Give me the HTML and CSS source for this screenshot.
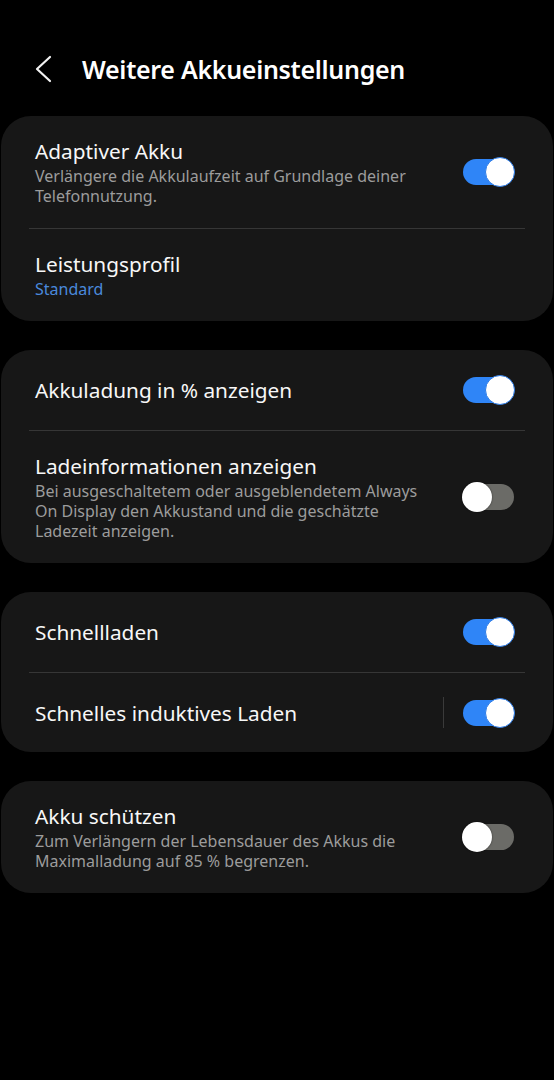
FILE: index.html
```html
<html>

<head>
    <meta name="viewport" content="width=device-width, initial-scale=1.0">
    <meta charset="UTF-8">
    <title>Weitere Akkueinstellungen</title>
    <link rel="stylesheet" href="styles.css">
</head>

<body>
    <div id="header">
        <svg class="back" width="20" height="28" viewBox="0 0 20 28">
            <path d="M16 2 L3 14 L16 26" fill="none" stroke="#f2f2f2" stroke-width="2.2" stroke-linecap="round" stroke-linejoin="round" />
        </svg>
        <h1>Weitere Akkueinstellungen</h1>
    </div>

    <div class="card">
        <div class="row">
            <div class="text">
                <div class="title">Adaptiver Akku</div>
                <div class="sub">Verlängere die Akkulaufzeit auf Grundlage deiner Telefonnutzung.</div>
            </div>
            <div class="switch on"></div>
        </div>
        <div class="row">
            <div class="text">
                <div class="title">Leistungsprofil</div>
                <div class="value">Standard</div>
            </div>
        </div>
    </div>

    <div class="card">
        <div class="row">
            <div class="text">
                <div class="title">Akkuladung in % anzeigen</div>
            </div>
            <div class="switch on"></div>
        </div>
        <div class="row">
            <div class="text">
                <div class="title">Ladeinformationen anzeigen</div>
                <div class="sub">Bei ausgeschaltetem oder ausgeblendetem Always On Display den Akkustand und die geschätzte Ladezeit anzeigen.</div>
            </div>
            <div class="switch"></div>
        </div>
    </div>

    <div class="card">
        <div class="row">
            <div class="text">
                <div class="title">Schnellladen</div>
            </div>
            <div class="switch on"></div>
        </div>
        <div class="row">
            <div class="text">
                <div class="title">Schnelles induktives Laden</div>
            </div>
            <div class="vline"></div>
            <div class="switch on"></div>
        </div>
    </div>

    <div class="card">
        <div class="row">
            <div class="text">
                <div class="title">Akku schützen</div>
                <div class="sub">Zum Verlängern der Lebensdauer des Akkus die Maximalladung auf 85 % begrenzen.</div>
            </div>
            <div class="switch"></div>
        </div>
    </div>
</body>

</html>
```

FILE: styles.css
```css
body {
    margin: 0;
    background-color: #000000;
    color: #f7f7f7;
    font-family: "Noto Sans", Roboto, sans-serif;
}

#header {
    display: flex;
    align-items: center;
    height: 52px;
    margin-top: 43px;
    margin-bottom: 21px;
    padding-left: 34px;
}

#header .back {
    margin-right: 28px;
}

#header h1 {
    margin: 0;
    font-size: 25px;
    font-weight: 600;
    letter-spacing: -0.3px;
    color: #ffffff;
}

.card {
    background-color: #171717;
    border-radius: 30px;
    margin: 0 1px 29px 1px;
    padding: 0 28px;
}

.row {
    display: flex;
    align-items: center;
    min-height: 80px;
    box-sizing: border-box;
    padding: 22px 10px 22px 6px;
    border-top: 1px solid #363636;
}

.row:first-child {
    border-top: none;
}

.text {
    flex: 1;
    padding-right: 30px;
}

.title {
    font-size: 20.8px;
    line-height: 26px;
}

.sub {
    margin-top: 2px;
    font-size: 16px;
    line-height: 20px;
    color: #9c9c9c;
}

.value {
    margin-top: 2px;
    font-size: 16px;
    line-height: 20px;
    color: #4a89dc;
}

.vline {
    width: 1px;
    height: 31px;
    background-color: #3a3a3a;
    margin-right: 18px;
}

.switch {
    position: relative;
    width: 53px;
    height: 30px;
    flex-shrink: 0;
}

.switch::before {
    content: "";
    position: absolute;
    left: 1px;
    right: 1px;
    top: 2px;
    bottom: 2px;
    border-radius: 13px;
    background-color: #6b6b67;
}

.switch::after {
    content: "";
    position: absolute;
    left: 0;
    top: 0;
    width: 30px;
    height: 30px;
    box-sizing: border-box;
    border-radius: 50%;
    background-color: #ffffff;
    box-shadow: 0 0 2px rgba(0, 0, 0, 0.6);
}

.switch.on::before {
    background-color: #2f85f7;
}

.switch.on::after {
    left: auto;
    right: 0;
    border: 1.5px solid #2a7be8;
    box-shadow: none;
}
```
